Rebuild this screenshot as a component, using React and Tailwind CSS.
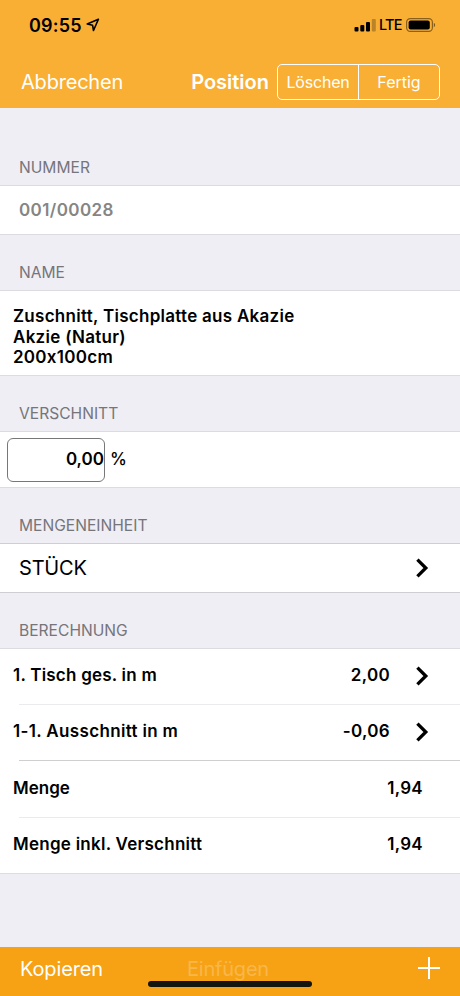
import React from 'react';

const rows = [
    { label: '1. Tisch ges. in m', value: '2,00', link: true, height: 'h-[56px]', line: 'bg-[#ebebed]', labelSpacing: 'tracking-[0.22px]' },
    { label: '1-1. Ausschnitt in m', value: '-0,06', link: true, height: 'h-[56px]', line: 'bg-[#cfcfd2]', labelSpacing: 'tracking-[0.34px]' },
    { label: 'Menge', value: '1,94', height: 'h-[57px]', line: 'bg-[#ebebed]', labelSpacing: 'tracking-[0px]' },
    { label: 'Menge inkl. Verschnitt', value: '1,94', height: 'h-[55px]', labelSpacing: 'tracking-[0.26px]' },
];

function Chevron() {
    return (
        <svg className="block h-5 w-[13px] shrink-0" viewBox="0 0 13 20" fill="none" stroke="#000" strokeWidth="3.3">
            <path d="M1.4 1.6 9.8 10l-8.4 8.4" />
        </svg>
    );
}

function SectionTitle({ children, className = 'h-[55px]' }) {
    return (
        <h2 className={`flex items-end pb-[7px] pl-[19px] text-[15.6px] leading-5 font-normal text-[#75757b] ${className}`}>
            {children}
        </h2>
    );
}

function StatusBar() {
    return (
        <div className="flex h-[50px] items-center justify-between pr-[23px] pl-[29px] text-black">
            <div className="flex items-center gap-1">
                <span className="text-[18px] font-semibold tracking-[0.2px]">09:55</span>
                <svg className="h-[14px] w-[14px]" viewBox="0 0 14 14" fill="none" stroke="#000" strokeWidth="1.6" strokeLinejoin="round">
                    <path d="M12.4 1.3 1.2 6l5.4 1.3.9 5.2z" />
                </svg>
            </div>
            <div className="flex items-center">
                <svg className="h-[14px] w-[23px]" viewBox="0 0 23 14">
                    <rect x="0.5" y="9" width="4" height="4.5" rx="1" />
                    <rect x="6.3" y="7" width="4" height="6.5" rx="1" />
                    <rect x="12" y="4" width="4" height="9.5" rx="1" />
                    <rect x="17.8" y="1" width="4" height="12.5" rx="1" fillOpacity="0.25" />
                </svg>
                <span className="ml-[2px] w-[27px] text-[14.5px] font-medium tracking-[-0.8px]">LTE</span>
                <svg className="h-[14px] w-[31px]" viewBox="0 0 31 14">
                    <rect x="0.6" y="0.6" width="25.8" height="12.8" rx="3.6" fill="none" stroke="#000" strokeOpacity="0.45" strokeWidth="1.2" />
                    <rect x="2.6" y="2.4" width="21.2" height="9.2" rx="2" />
                    <path d="M27.8 4.8c1.8.7 1.8 3.7 0 4.4z" fillOpacity="0.5" />
                </svg>
            </div>
        </div>
    );
}

export default function App() {
    return (
        <div className="flex h-[996px] w-[460px] flex-col overflow-hidden bg-[#efeef4] font-['Inter','Liberation_Sans',sans-serif] text-black [font-feature-settings:'calt'_0]">
            <header className="h-[108px] shrink-0 bg-[#f9af34]">
                <StatusBar />
                <div className="flex h-[63px] items-center pr-5 pl-[21px] text-white">
                    <button className="text-[20px] tracking-[-0.2px]">Abbrechen</button>
                    <h1 className="mr-2 ml-auto text-[20px] font-semibold">Position</h1>
                    <div className="flex h-9 w-[163px] rounded-[5px] border-[1.5px] border-white text-[16px]">
                        <button className="w-[81px] border-r border-white tracking-[-0.2px]">Löschen</button>
                        <button className="flex-1">Fertig</button>
                    </div>
                </div>
            </header>

            <main className="flex-1">
                <SectionTitle className="h-[77px]">NUMMER</SectionTitle>
                <div className="flex h-[50px] items-center border-y border-[#dcdce0] bg-white pt-0.5 pl-[19px] text-[17px] font-semibold tracking-[0.4px] text-[#858585]">
                    001/00028
                </div>

                <SectionTitle>NAME</SectionTitle>
                <div className="flex h-[86px] flex-col justify-center border-y border-[#dcdce0] bg-white pt-[8px] pl-[13px] text-[17px] leading-[20.7px] font-semibold tracking-[0.28px]">
                    <p>Zuschnitt, Tischplatte aus Akazie</p>
                    <p>Akzie (Natur)</p>
                    <p>200x100cm</p>
                </div>

                <SectionTitle>VERSCHNITT</SectionTitle>
                <div className="flex h-[57px] items-center border-y border-[#dcdce0] bg-white pl-[7px] text-[17px] font-semibold">
                    <div className="flex h-[44px] w-[98px] items-center justify-end rounded-md border border-[#777]">0,00</div>
                    <span className="ml-[5px] font-medium">%</span>
                </div>

                <SectionTitle>MENGENEINHEIT</SectionTitle>
                <div className="flex h-[50px] items-center justify-between border-y border-[#cfcfd3] bg-white pr-[31px] pl-[19px] text-[20px]">
                    <span className="tracking-[-0.2px]">STÜCK</span>
                    <Chevron />
                </div>

                <SectionTitle>BERECHNUNG</SectionTitle>
                <div className="border-y border-[#dcdce0] bg-white text-[17px] font-semibold">
                    {rows.map((row) => (
                        <div key={row.label} className={`flex flex-col ${row.height}`}>
                            <div className={`flex flex-1 items-center pb-px pl-[13px] ${row.link ? 'pr-[31px]' : 'pr-[37px]'}`}>
                                <span className={row.labelSpacing}>{row.label}</span>
                                <span className="ml-auto tracking-[0.3px]">{row.value}</span>
                                {row.link && <span className="ml-[26px]"><Chevron /></span>}
                            </div>
                            {row.line && <div className={`ml-[19px] h-px ${row.line}`} />}
                        </div>
                    ))}
                </div>
            </main>

            <footer className="relative flex h-[49px] shrink-0 items-start bg-[#f6a214] pt-[7px] pr-5 pl-5 text-[20px] leading-[30px] text-white">
                <button className="tracking-[-0.15px]">Kopieren</button>
                <button className="ml-auto tracking-[-0.2px] text-[#f9b74b]" disabled>Einfügen</button>
                <svg className="mt-[3px] ml-[149px] h-[22px] w-[22px]" viewBox="0 0 22 22" stroke="#fff" strokeWidth="2">
                    <path d="M11 0v22M0 11h22" />
                </svg>
                <div className="absolute bottom-[9px] left-[148px] h-[6px] w-[164px] rounded-full bg-[#15150f]" />
            </footer>
        </div>
    );
}
